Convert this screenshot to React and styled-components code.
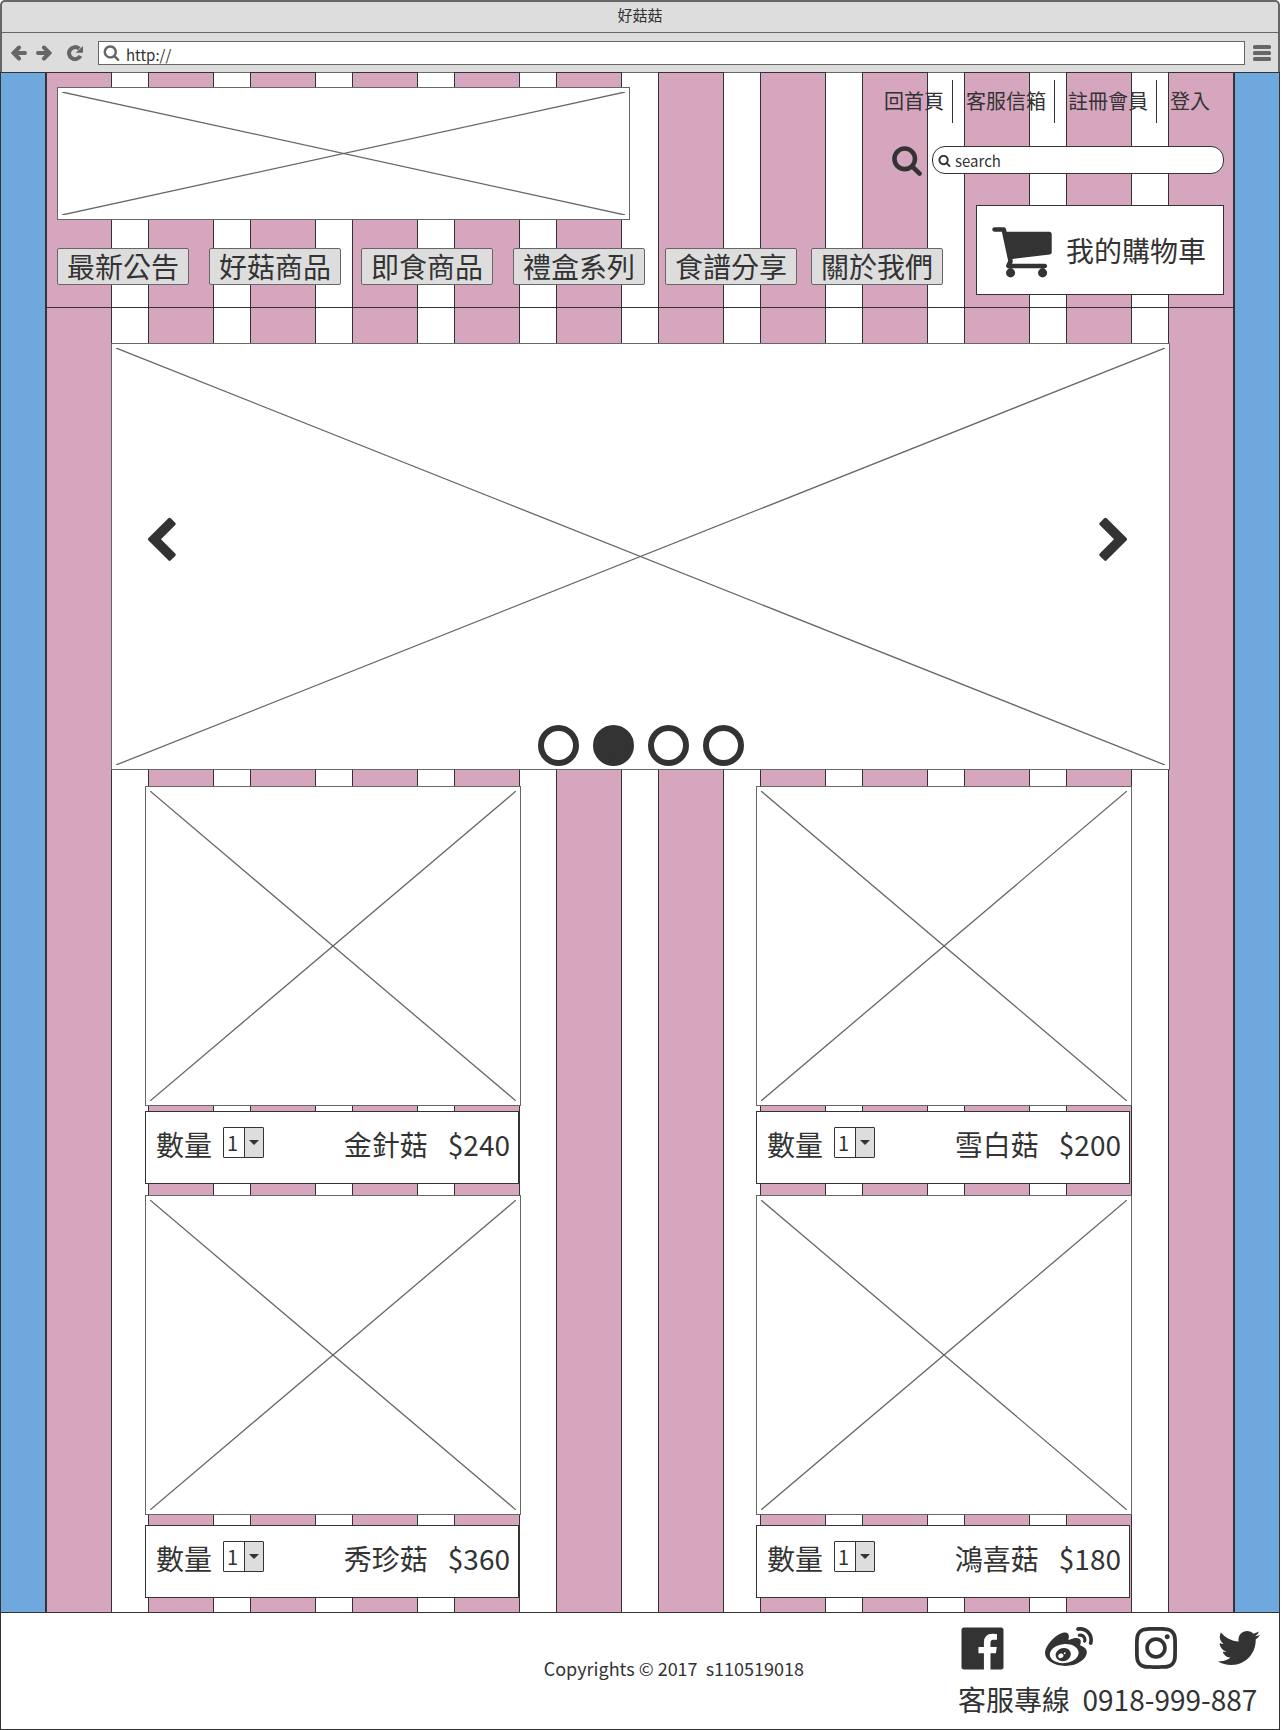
import React from "react";
import styled, { createGlobalStyle } from "styled-components";
import { FaInstagram, FaTwitter, FaWeibo } from "react-icons/fa";

const ink = "#333333";
const edge = "#666666";
const chrome = "#dddddd";
const pink = "#d5a6bd";
const blue = "#6fa8dc";

const GlobalStyle = createGlobalStyle`
  *, *::before, *::after { box-sizing: border-box; }
  body {
    margin: 0;
    background: #ffffff;
    color: ${ink};
    font-family: "Noto Sans CJK TC", "Open Sans", sans-serif;
  }
  button, input, select { font: inherit; color: inherit; }
  a { color: inherit; text-decoration: none; }
`;

const Page = styled.div`
  padding-right: 4px;
`;

/* Browser frame */

const TitleBar = styled.div`
  height: 33px;
  border: 2px solid ${edge};
  border-bottom: 1px solid ${edge};
  border-radius: 5px 5px 0 0;
  background: ${chrome};
  font-size: 15px;
  line-height: 25px;
  text-align: center;
`;

const Toolbar = styled.div`
  display: flex;
  align-items: center;
  gap: 8px;
  height: 40px;
  padding: 0 7px 0 9px;
  border: solid ${edge};
  border-width: 0 2px 1px;
  background: ${chrome};
  color: ${edge};
`;

const ToolbarMain = styled.div`
  flex: 1;
  display: flex;
  align-items: center;
  gap: 15px;
`;

const HistoryButtons = styled.div`
  display: flex;
  gap: 9px;
`;

const IconButton = styled.button`
  display: block;
  padding: 0;
  border: 0;
  background: none;
  line-height: 0;
  cursor: pointer;
`;

const AddressBox = styled.label`
  flex: 1;
  display: flex;
  align-items: center;
  gap: 6px;
  height: 24px;
  padding: 0 4px;
  border: 1px solid ${edge};
  background: #ffffff;
`;

const AddressInput = styled.input`
  flex: 1;
  min-width: 0;
  height: 22px;
  padding: 4px 0 0;
  border: 0;
  outline: 0;
  background: none;
  color: ${ink};
  font-size: 15px;
  line-height: 18px;
`;

/* Striped backdrop */

const Body = styled.div`
  display: grid;
  grid-template-columns: 46px minmax(0, 1fr) 46px;
  margin-top: -1px;
`;

const SidePanel = styled.div`
  grid-row: 1;
  border: solid ${ink};
  border-width: 1px 1px 0;
  background: ${blue};
`;

const Stripes = styled.div`
  grid-area: 1 / 2;
  display: flex;
  justify-content: space-between;
`;

const Stripe = styled.div`
  width: 66px;
  border: solid ${ink};
  border-width: 1px 1px 0;
  background: ${pink};
`;

const Content = styled.div`
  grid-area: 1 / 2;
  position: relative;
`;

/* Header */

const Header = styled.header`
  display: grid;
  grid-template-columns: 573px 1fr 248px;
  grid-template-rows: 44px 72px 24px auto;
  padding: 8px 10px 0 11px;
  border-bottom: 1px solid ${ink};
`;

const Frame = styled.div`
  height: ${(p) => p.$height}px;
  padding: 4px;
  border: 1px solid ${edge};
  background: #ffffff;

  svg { display: block; width: 100%; height: 100%; }
`;

const Logo = styled.div`
  grid-area: 1 / 1 / 4 / 2;
  align-self: end;
`;

const MemberLinks = styled.nav`
  grid-area: 1 / 2 / 2 / 4;
  justify-self: end;
  display: flex;
  align-items: flex-start;
  padding-right: 14px;
`;

const MemberLink = styled.a`
  height: 43px;
  padding: 0 8px 0 13px;
  border-right: 1px solid ${ink};
  font-size: 20px;
  line-height: 41px;
  white-space: nowrap;

  &:last-child { padding-right: 0; border-right: 0; }
`;

const SearchRow = styled.form`
  grid-area: 2 / 2 / 3 / 4;
  justify-self: end;
  display: flex;
  align-items: center;
  gap: 9px;
`;

const SearchBox = styled.label`
  display: flex;
  align-items: center;
  gap: 4px;
  width: 292px;
  height: 28px;
  padding: 0 12px 0 5px;
  border: 1px solid ${ink};
  border-radius: 13px;
  background: #ffffff;
`;

const SearchInput = styled.input`
  flex: 1;
  min-width: 0;
  height: 26px;
  padding: 0;
  border: 0;
  outline: 0;
  background: none;
  font-size: 15px;

  &::placeholder { color: ${ink}; opacity: 1; }
`;

const MainNav = styled.nav`
  grid-area: 4 / 1 / 5 / 3;
  display: flex;
  gap: 14px;
  padding: 28px 0 22px;
`;

const NavGroup = styled.div`
  display: flex;
  gap: 20px;
`;

const NavButton = styled.button`
  width: 132px;
  height: 37px;
  padding: 0 0 2px;
  border: 1px solid ${edge};
  border-radius: 2px;
  background: ${chrome};
  font-size: 28px;
  line-height: 32px;
  white-space: nowrap;
  cursor: pointer;
`;

const CartButton = styled.button`
  grid-area: 3 / 3 / 5 / 4;
  display: flex;
  align-items: center;
  gap: 12px;
  height: 90px;
  margin-top: 9px;
  padding: 0 0 0 13px;
  border: 1px solid ${ink};
  background: #ffffff;
  font-size: 28px;
  line-height: 36px;
  white-space: nowrap;
  cursor: pointer;
`;

/* Carousel */

const Carousel = styled.section`
  position: relative;
  margin: 35px 64px 16px 65px;
`;

const Arrow = styled(IconButton)`
  position: absolute;
  top: 174px;
  ${(p) => (p.$side === "left" ? "left: 26px;" : "right: 32px;")}
`;

const Dots = styled.div`
  position: absolute;
  left: 0;
  right: 0;
  bottom: 4px;
  display: flex;
  justify-content: center;
  gap: 14px;
`;

const Dot = styled.button`
  width: 41px;
  height: 41px;
  padding: 0;
  border: 6px solid ${ink};
  border-radius: 50%;
  background: ${(p) => (p.$active ? ink : "#ffffff")};
  cursor: pointer;
`;

/* Products */

const Products = styled.main`
  display: flex;
  flex-direction: column;
  gap: 11px;
  padding: 0 102px 14px 99px;
`;

const ProductRow = styled.div`
  display: flex;
  justify-content: space-between;
`;

const Card = styled.article`
  display: flex;
  flex-direction: column;
  gap: ${(p) => p.$gap}px;
  width: 376px;
`;

const CardInfo = styled.div`
  display: flex;
  align-items: flex-start;
  height: 73px;
  margin-right: 2px;
  padding: 15px 8px 0 10px;
  border: 1px solid ${ink};
  background: #ffffff;
  font-size: 28px;
  line-height: 34px;
  white-space: nowrap;
`;

const Quantity = styled.label`
  flex: 1;
  display: flex;
  gap: 11px;
`;

const SelectBox = styled.span`
  position: relative;
  width: 41px;
  height: 31px;

  &::after {
    content: "";
    position: absolute;
    top: 13px;
    right: 5px;
    border: 5px solid transparent;
    border-top-color: ${ink};
    border-bottom: 0;
    pointer-events: none;
  }
`;

const Select = styled.select`
  appearance: none;
  display: block;
  width: 100%;
  height: 100%;
  padding: 0 0 0 3px;
  border: 1px solid ${ink};
  border-radius: 1px;
  background: linear-gradient(to right, #ffffff 20px, ${ink} 20px, ${ink} 21px, ${chrome} 21px);
  font-size: 20px;
  line-height: 28px;
`;

const Price = styled.span`
  margin-left: 20px;
`;

/* Footer */

const Footer = styled.footer`
  display: flex;
  align-items: center;
  height: 118px;
  padding: 0 19px 2px 0;
  border: 1px solid ${ink};
`;

const Copyright = styled.p`
  flex: 1;
  margin: 0;
  padding: 0 154px 4px 0;
  font-size: 18px;
  line-height: 24px;
  text-align: right;
  white-space: pre;
`;

const Contact = styled.div`
  display: flex;
  flex-direction: column;
  gap: 8px;
  width: 302px;
`;

const Social = styled.div`
  display: flex;
  align-items: center;
  justify-content: space-between;

  a { line-height: 0; }
`;

const Hotline = styled.p`
  margin: 0;
  font-size: 28px;
  line-height: 36px;
  white-space: pre;
`;

/* Icons */

const glyphs = {
  search:
    "M1216 832q0-185-131.5-316.5t-316.5-131.5-316.5 131.5-131.5 316.5 131.5 316.5 316.5 131.5 316.5-131.5 131.5-316.5zm512 832q0 52-38 90t-90 38q-54 0-90-38l-343-342q-179 124-399 124-143 0-273.5-55.5t-225-150-150-225-55.5-273.5 55.5-273.5 150-225 225-150 273.5-55.5 273.5 55.5 225 150 150 225 55.5 273.5q0 220-124 399l343 343q37 37 37 90z",
  cart:
    "M704 1536q0 52-38 90t-90 38-90-38-38-90 38-90 90-38 90 38 38 90zm896 0q0 52-38 90t-90 38-90-38-38-90 38-90 90-38 90 38 38 90zm128-1088v512q0 24-16.5 42.5t-40.5 21.5l-1044 122q13 60 13 70 0 16-24 64h920q26 0 45 19t19 45-19 45-45 19h-1024q-26 0-45-19t-19-45q0-11 8-31.5t16-36 21.5-40 15.5-29.5l-177-823h-204q-26 0-45-19t-19-45 19-45 45-19h256q16 0 28.5 6.5t19.5 15.5 13 24.5 8 26 5.5 29.5 4.5 26h1201q26 0 45 19t19 45z",
  left:
    "M1427 301l-531 531 531 531q19 19 19 45t-19 45l-166 166q-19 19-45 19t-45-19l-742-742q-19-19-19-45t19-45l742-742q19-19 45-19t45 19l166 166q19 19 19 45t-19 45z",
  right:
    "M1363 877l-742 742q-19 19-45 19t-45-19l-166-166q-19-19-19-45t19-45l531-531-531-531q-19-19-19-45t19-45l166-166q19-19 45-19t45 19l742 742q19 19 19 45t-19 45z",
  facebook:
    "M1579 128q35 0 60 25t25 60v1366q0 35-25 60t-60 25h-391v-595h199l30-232h-229v-148q0-56 23.5-84t91.5-28l122-1v-207q-63-9-178-9-136 0-217.5 80t-81.5 226v171h-200v232h200v595h-735q-35 0-60-25t-25-60v-1366q0-35 25-60t60-25h1366z",
};

const Glyph = ({ name, size }) => (
  <svg width={size} height={size} viewBox="0 0 1792 1792" fill="currentColor" aria-hidden="true">
    <path d={glyphs[name]} />
  </svg>
);

const ArrowIcon = ({ forward }) => (
  <svg width="16" height="16" viewBox="0 0 16 16" fill="none" stroke="currentColor" strokeLinecap="round" aria-hidden="true">
    <path
      strokeWidth="4"
      d={forward ? "M2 8H12M8 2.5L13.5 8 8 13.5" : "M14 8H4M8 2.5L2.5 8 8 13.5"}
    />
  </svg>
);

const ReloadIcon = () => (
  <svg width="16" height="16" viewBox="0 0 16 16" aria-hidden="true">
    <path d="M13.4 10.8A6 6 0 1 1 12.2 3.8" fill="none" stroke="currentColor" strokeWidth="4" />
    <path d="M16 1v6.8H8.6z" fill="currentColor" />
  </svg>
);

const MenuIcon = () => (
  <svg width="18" height="16" viewBox="0 0 18 16" fill="currentColor" aria-hidden="true">
    <rect width="18" height="4" rx="1.6" />
    <rect y="6" width="18" height="4" rx="1.6" />
    <rect y="12" width="18" height="4" rx="1.6" />
  </svg>
);

const Placeholder = ({ height }) => (
  <Frame $height={height}>
    <svg stroke={edge} strokeWidth="1.3" aria-hidden="true">
      <line x1="0" y1="0" x2="100%" y2="100%" />
      <line x1="0" y1="100%" x2="100%" y2="0" />
    </svg>
  </Frame>
);

const memberLinks = ["回首頁", "客服信箱", "註冊會員", "登入"];
const categories = ["最新公告", "好菇商品", "即食商品", "禮盒系列", "食譜分享"];
const productRows = [
  { gap: 5, items: [{ name: "金針菇", price: "$240" }, { name: "雪白菇", price: "$200" }] },
  { gap: 10, items: [{ name: "秀珍菇", price: "$360" }, { name: "鴻喜菇", price: "$180" }] },
];

const Product = ({ name, price, gap }) => (
  <Card $gap={gap}>
    <Placeholder height={320} />
    <CardInfo>
      <Quantity>
        數量
        <SelectBox>
          <Select defaultValue="1">
            <option>1</option>
            <option>2</option>
            <option>3</option>
          </Select>
        </SelectBox>
      </Quantity>
      <span>{name}</span>
      <Price>{price}</Price>
    </CardInfo>
  </Card>
);

export default function App() {
  const [slide, setSlide] = React.useState(1);

  return (
    <Page>
      <GlobalStyle />
      <TitleBar>好菇菇</TitleBar>
      <Toolbar>
        <ToolbarMain>
          <HistoryButtons>
            <IconButton aria-label="上一頁"><ArrowIcon /></IconButton>
            <IconButton aria-label="下一頁"><ArrowIcon forward /></IconButton>
          </HistoryButtons>
          <IconButton aria-label="重新整理"><ReloadIcon /></IconButton>
          <AddressBox>
            <Glyph name="search" size={17} />
            <AddressInput aria-label="網址" defaultValue="http://" />
          </AddressBox>
        </ToolbarMain>
        <IconButton aria-label="選單"><MenuIcon /></IconButton>
      </Toolbar>

      <Body>
        <SidePanel />
        <Stripes>
          {Array.from({ length: 12 }, (_, i) => <Stripe key={i} />)}
        </Stripes>
        <Content>
          <Header>
            <Logo><Placeholder height={133} /></Logo>
            <MemberLinks>
              {memberLinks.map((text) => <MemberLink key={text} href="#">{text}</MemberLink>)}
            </MemberLinks>
            <SearchRow onSubmit={(e) => e.preventDefault()}>
              <IconButton aria-label="搜尋"><Glyph name="search" size={32} /></IconButton>
              <SearchBox>
                <Glyph name="search" size={13} />
                <SearchInput aria-label="搜尋商品" placeholder="search" />
              </SearchBox>
            </SearchRow>
            <MainNav>
              <NavGroup>
                {categories.map((text) => <NavButton key={text}>{text}</NavButton>)}
              </NavGroup>
              <NavButton>關於我們</NavButton>
            </MainNav>
            <CartButton><Glyph name="cart" size={64} />我的購物車</CartButton>
          </Header>

          <Carousel>
            <Placeholder height={427} />
            <Arrow $side="left" aria-label="上一張" onClick={() => setSlide((slide + 3) % 4)}>
              <Glyph name="left" size={48} />
            </Arrow>
            <Arrow $side="right" aria-label="下一張" onClick={() => setSlide((slide + 1) % 4)}>
              <Glyph name="right" size={48} />
            </Arrow>
            <Dots>
              {[0, 1, 2, 3].map((i) => (
                <Dot key={i} $active={i === slide} aria-label={`第 ${i + 1} 張`} onClick={() => setSlide(i)} />
              ))}
            </Dots>
          </Carousel>

          <Products>
            {productRows.map((row) => (
              <ProductRow key={row.gap}>
                {row.items.map((item) => <Product key={item.name} gap={row.gap} {...item} />)}
              </ProductRow>
            ))}
          </Products>
        </Content>
        <SidePanel />
      </Body>

      <Footer>
        <Copyright>{"Copyrights © 2017  s110519018"}</Copyright>
        <Contact>
          <Social>
            <a href="#" aria-label="Facebook"><Glyph name="facebook" size={49} /></a>
            <a href="#" aria-label="Weibo"><FaWeibo size={48} /></a>
            <a href="#" aria-label="Instagram"><FaInstagram size={48} /></a>
            <a href="#" aria-label="Twitter"><FaTwitter size={42} /></a>
          </Social>
          <Hotline>{"客服專線  0918-999-887"}</Hotline>
        </Contact>
      </Footer>
    </Page>
  );
}
